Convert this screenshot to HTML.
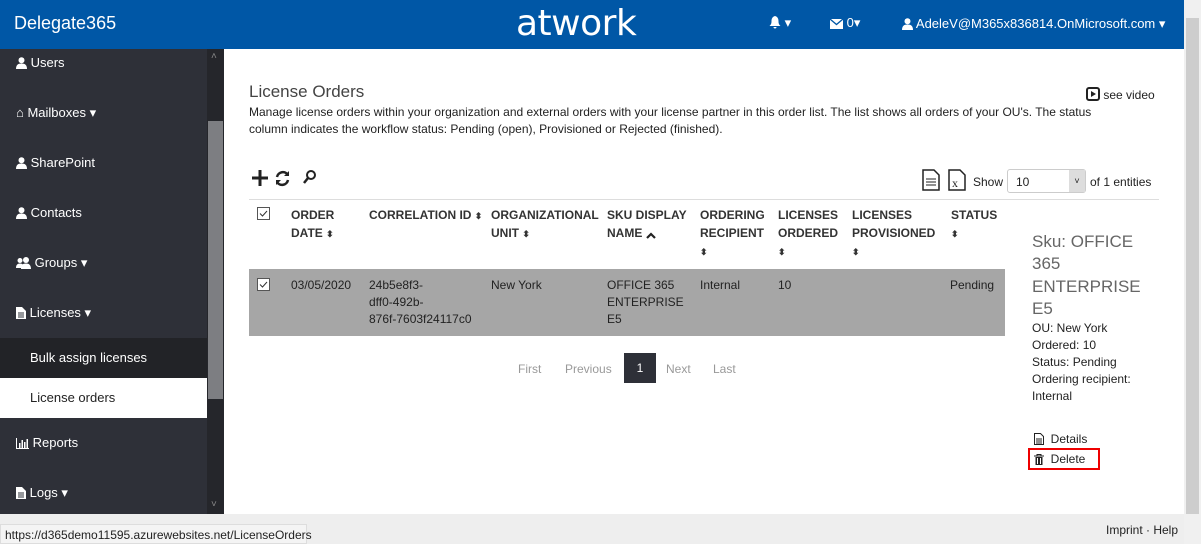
<!DOCTYPE html>
<html><head><meta charset="utf-8"><style>
*{box-sizing:border-box;margin:0;padding:0}
body{width:1201px;height:544px;overflow:hidden;font-family:"Liberation Sans",sans-serif;font-size:12px;color:#222;background:#fff;position:relative}
.hdr{position:absolute;left:0;top:0;width:1184px;height:49px;background:#0057a6;color:#fff}
.abs{position:absolute}
.side{position:absolute;left:0;top:49px;width:207px;height:465px;background:#2e3038;color:#fff;font-size:13px}
.side .it{position:absolute;left:16px}
.sb{position:absolute;left:207px;top:49px;width:17px;height:465px;background:#25262b}
.pscroll{position:absolute;left:1184px;top:0;width:17px;height:544px;background:#f0f0f0}
.foot{position:absolute;left:0;top:514px;width:1184px;height:30px;background:#eee}
.h{font-weight:bold;font-size:12px;color:#333;line-height:18px}
.sort{font-size:9px}
svg{vertical-align:-2px}
</style></head><body>
<div class="hdr">
 <div class="abs" style="left:14px;top:13px;font-size:18px">Delegate365</div>
 <div class="abs" style="left:516px;top:3px;font-size:36px;font-family:'DejaVu Sans',sans-serif;letter-spacing:-0.5px">atwork</div>
 <div class="abs" style="left:769px;top:15px;font-size:13px"><svg width="12" height="13" viewBox="0 0 12 13"><path d="M6 0C3 1 2.5 3 2.5 5.5 2.5 8 1.5 9 0.5 10h11c-1-1-2-2-2-4.5C9.5 3 9 1 6 0zM4.5 11a1.5 1.5 0 003 0z" fill="#fff"/></svg> ▾</div>
 <div class="abs" style="left:830px;top:15px;font-size:13px"><svg width="13" height="10" viewBox="0 0 13 10"><rect width="13" height="10" fill="#fff"/><path d="M0 0l6.5 5.5L13 0" stroke="#0057a6" fill="none" stroke-width="1.3"/></svg> 0▾</div>
 <div class="abs" style="left:902px;top:16px;font-size:13px"><svg width="11" height="12" viewBox="0 0 11 12"><circle cx="5.5" cy="3.2" r="3" fill="#fff"/><path d="M0 12c0-4 2-5.5 5.5-5.5S11 8 11 12z" fill="#fff"/></svg> AdeleV@M365x836814.OnMicrosoft.com ▾</div>
</div>
<div class="side">
 <div class="it" style="top:6px"><svg width="11" height="12" viewBox="0 0 11 12"><circle cx="5.5" cy="3.2" r="3" fill="#fff"/><path d="M0 12c0-4 2-5.5 5.5-5.5S11 8 11 12z" fill="#fff"/></svg> Users</div>
 <div class="it" style="top:56px">⌂ Mailboxes ▾</div>
 <div class="it" style="top:106px"><svg width="11" height="12" viewBox="0 0 11 12"><circle cx="5.5" cy="3.2" r="3" fill="#fff"/><path d="M0 12c0-4 2-5.5 5.5-5.5S11 8 11 12z" fill="#fff"/></svg> SharePoint</div>
 <div class="it" style="top:156px"><svg width="11" height="12" viewBox="0 0 11 12"><circle cx="5.5" cy="3.2" r="3" fill="#fff"/><path d="M0 12c0-4 2-5.5 5.5-5.5S11 8 11 12z" fill="#fff"/></svg> Contacts</div>
 <div class="it" style="top:206px"><svg width="15" height="12" viewBox="0 0 15 12"><circle cx="4" cy="3.5" r="2.5" fill="#fff"/><circle cx="10" cy="3" r="3" fill="#fff"/><path d="M0 11c0-3 1.5-4.5 4-4.5s4 1.5 4 4.5zM5 12c0-4 2-5.5 5-5.5s5 1.5 5 5.5z" fill="#fff"/></svg> Groups ▾</div>
 <div class="it" style="top:256px"><svg width="10" height="12" viewBox="0 0 10 12"><path d="M0 0h6l4 4v8H0z" fill="#fff"/><path d="M2 6h6M2 8h6M2 10h6" stroke="#2e3038"/></svg> Licenses ▾</div>
 <div class="abs" style="left:0;top:289px;width:207px;height:40px;background:#222327"><span class="abs" style="left:30px;top:12px">Bulk assign licenses</span></div>
 <div class="abs" style="left:0;top:329px;width:207px;height:40px;background:#fff;color:#222"><span class="abs" style="left:30px;top:12px">License orders</span></div>
 <div class="it" style="top:386px"><svg width="13" height="11" viewBox="0 0 13 11"><path d="M0.5 0v10.5H13" stroke="#fff" fill="none"/><path d="M3 5h1.5v5H3zM5.5 2h1.5v8H5.5zM8 4h1.5v6H8zM10.5 1H12v9h-1.5z" fill="#fff"/></svg> Reports</div>
 <div class="it" style="top:436px"><svg width="10" height="12" viewBox="0 0 10 12"><path d="M0 0h6l4 4v8H0z" fill="#fff"/><path d="M2 6h6M2 8h6M2 10h6" stroke="#2e3038"/></svg> Logs ▾</div>
</div>
<div class="sb"><div class="abs" style="left:1px;top:72px;width:15px;height:278px;background:#7d7e82"></div>
<div class="abs" style="left:4px;top:2px;color:#888;font-size:10px">˄</div><div class="abs" style="left:4px;top:450px;color:#888;font-size:10px">˅</div></div>
<div class="pscroll"><div class="abs" style="left:2px;top:18px;width:13px;height:496px;background:#cdcdcd"></div></div>

<div class="abs" style="left:249px;top:82px;font-size:17px;color:#444">License Orders</div>
<div class="abs" style="left:1086px;top:87px;font-size:12px"><svg width="14" height="14" viewBox="0 0 14 14"><rect x="1" y="1" width="12" height="12" rx="2" fill="none" stroke="#222" stroke-width="2"/><path d="M5 4l5 3-5 3z" fill="#222"/></svg> see video</div>
<div class="abs" style="left:249px;top:104px;width:880px;font-size:12px;line-height:17px">Manage license orders within your organization and external orders with your license partner in this order list. The list shows all orders of your OU's. The status column indicates the workflow status: Pending (open), Provisioned or Rejected (finished).</div>
<div class="abs" style="left:252px;top:169px"><svg width="66" height="18" viewBox="0 0 66 18"><path d="M8 1v16M0 9h16" stroke="#222" stroke-width="3"/><path d="M25 8a6 6 0 0111-2M36 11a6 6 0 01-11 2" stroke="#222" stroke-width="2.5" fill="none"/><path d="M37 2v5h-5zM24 16v-5h5z" fill="#222"/><circle cx="59" cy="6" r="4" stroke="#222" stroke-width="2" fill="none"/><path d="M56 9l-4 5" stroke="#222" stroke-width="2.5"/></svg></div>
<div class="abs" style="left:922px;top:169px"><svg width="44" height="22" viewBox="0 0 44 22"><path d="M1 1h11l5 5v15H1z" fill="#fff" stroke="#222" stroke-width="1.5"/><path d="M4 10h10M4 13h10M4 16h10" stroke="#222"/><path d="M27 1h11l5 5v15H27z" fill="#fff" stroke="#222" stroke-width="1.5"/><text x="30" y="18" font-size="12" font-family="Liberation Serif" fill="#222">x</text></svg></div>
<div class="abs" style="left:973px;top:175px">Show</div>
<div class="abs" style="left:1007px;top:169px;width:79px;height:24px;border:1px solid #ccc;border-radius:3px;padding:5px 8px">10<span class="abs" style="right:0;top:0;width:16px;height:22px;background:#ddd;text-align:center;font-size:9px;line-height:22px">˅</span></div>
<div class="abs" style="left:1090px;top:175px">of 1 entities</div>
<div class="abs" style="left:249px;top:199px;width:910px;height:1px;background:#ddd"></div>

<div class="abs" style="left:257px;top:207px"><svg width="13" height="13" viewBox="0 0 13 13"><rect x="0.5" y="0.5" width="12" height="12" fill="#fff" stroke="#555"/><path d="M3 6.5l2.5 2.5 4.5-5" stroke="#333" fill="none"/></svg></div>
<div class="abs h" style="left:291px;top:206px">ORDER<br>DATE <span class="sort">⬍</span></div>
<div class="abs h" style="left:369px;top:206px">CORRELATION ID <span class="sort">⬍</span></div>
<div class="abs h" style="left:491px;top:206px">ORGANIZATIONAL<br>UNIT <span class="sort">⬍</span></div>
<div class="abs h" style="left:607px;top:206px">SKU DISPLAY<br>NAME <svg width="10" height="7" viewBox="0 0 10 7"><path d="M1 6l4-4 4 4" stroke="#222" stroke-width="2.2" fill="none"/></svg></div>
<div class="abs h" style="left:700px;top:206px">ORDERING<br>RECIPIENT<br><span class="sort">⬍</span></div>
<div class="abs h" style="left:778px;top:206px">LICENSES<br>ORDERED<br><span class="sort">⬍</span></div>
<div class="abs h" style="left:852px;top:206px">LICENSES<br>PROVISIONED<br><span class="sort">⬍</span></div>
<div class="abs h" style="left:951px;top:206px">STATUS<br><span class="sort">⬍</span></div>

<div class="abs" style="left:249px;top:269px;width:756px;height:67px;background:#a6a6a6;line-height:17px">
 <span class="abs" style="left:8px;top:8px"><svg width="13" height="13" viewBox="0 0 13 13"><rect x="0.5" y="0.5" width="12" height="12" fill="#fff" stroke="#555"/><path d="M3 6.5l2.5 2.5 4.5-5" stroke="#333" fill="none"/></svg></span>
 <span class="abs" style="left:42px;top:8px">03/05/2020</span>
 <span class="abs" style="left:120px;top:8px">24b5e8f3-<br>dff0-492b-<br>876f-7603f24117c0</span>
 <span class="abs" style="left:242px;top:8px">New York</span>
 <span class="abs" style="left:358px;top:8px">OFFICE 365<br>ENTERPRISE<br>E5</span>
 <span class="abs" style="left:451px;top:8px">Internal</span>
 <span class="abs" style="left:529px;top:8px">10</span>
 <span class="abs" style="left:701px;top:8px">Pending</span>
</div>
<div class="abs" style="left:518px;top:362px;color:#999">First</div>
<div class="abs" style="left:565px;top:362px;color:#999">Previous</div>
<div class="abs" style="left:624px;top:353px;width:32px;height:30px;background:#2e3038;color:#fff;text-align:center;line-height:30px">1</div>
<div class="abs" style="left:666px;top:362px;color:#999">Next</div>
<div class="abs" style="left:713px;top:362px;color:#999">Last</div>

<div class="abs" style="left:1032px;top:231px;font-size:17px;color:#666;line-height:22.3px">Sku: OFFICE<br>365<br>ENTERPRISE<br>E5</div>
<div class="abs" style="left:1032px;top:320px;line-height:17px">OU: New York<br>Ordered: 10<br>Status: Pending<br>Ordering recipient:<br>Internal</div>
<div class="abs" style="left:1034px;top:432px"><svg width="10" height="12" viewBox="0 0 10 12"><path d="M0.5 0.5h6l3 3v8h-9z" fill="none" stroke="#222"/><path d="M2 6h6M2 8h6M2 10h6" stroke="#222"/></svg>&nbsp; Details</div>
<div class="abs" style="left:1028px;top:448px;width:72px;height:22px;border:2px solid #e00"></div>
<div class="abs" style="left:1034px;top:452px"><svg width="10" height="11" viewBox="0 0 10 11"><path d="M0 2h10M3 2V0.5h4V2" stroke="#222" fill="none"/><path d="M1.5 3h7v8h-7z" fill="#222"/><path d="M3.5 4v6M6.5 4v6" stroke="#fff"/></svg>&nbsp; Delete</div>

<div class="foot"><div class="abs" style="left:1106px;top:9px">Imprint · Help</div></div>
<div class="abs" style="left:0;top:524px;width:307px;height:20px;background:#f4f4f4;border:1px solid #ddd;padding:3px 4px;font-size:12px;color:#222">https://d365demo11595.azurewebsites.net/LicenseOrders</div>
</body></html>
